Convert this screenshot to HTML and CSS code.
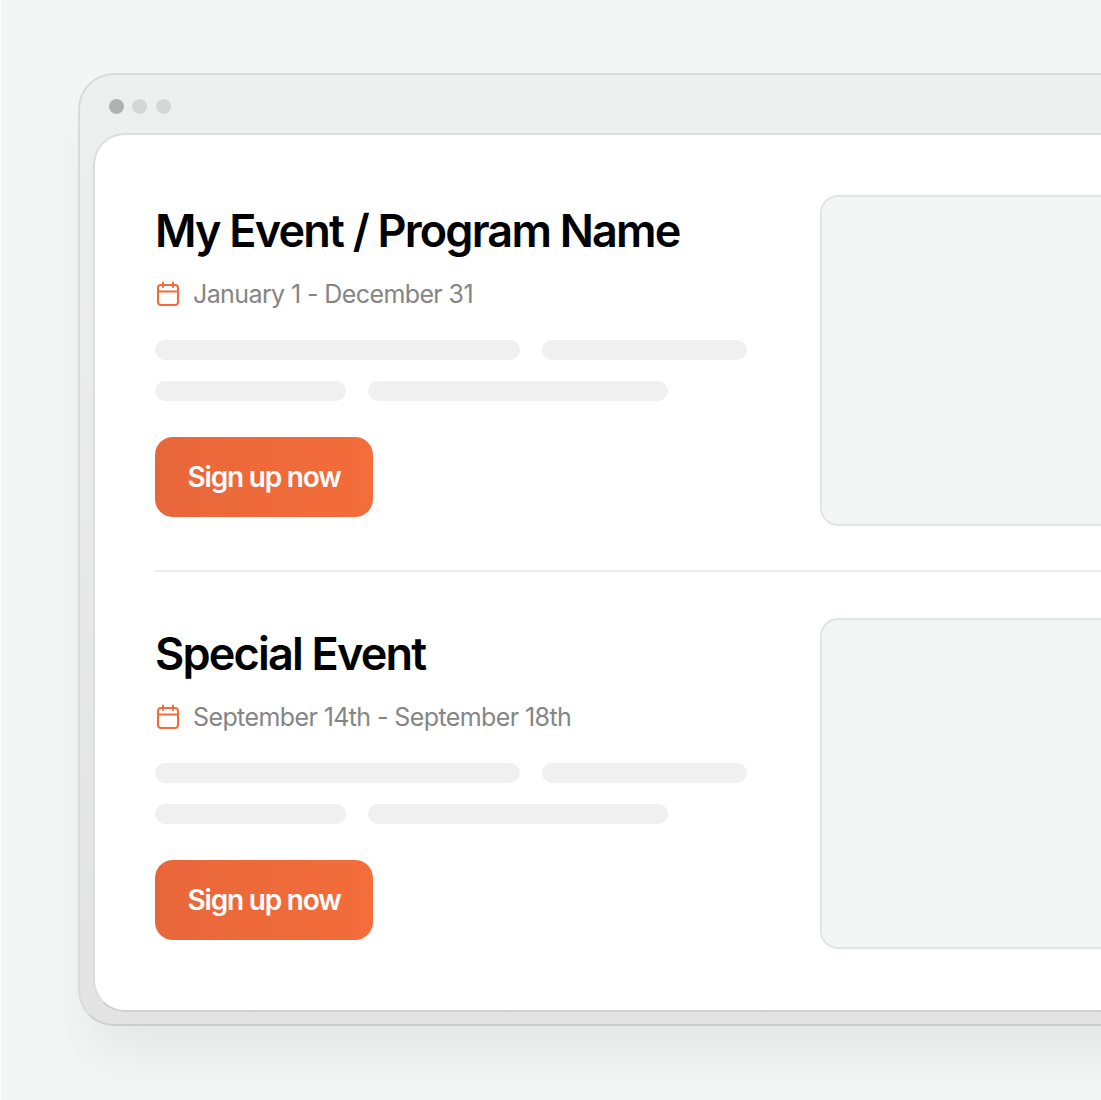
FILE: index.html
```html
<!DOCTYPE HTML>
<html>
<head>
  <title>Events</title>
  <meta name="viewport" content="width=device-width, initial-scale=1">
  <link rel="stylesheet" href="styles.css">
</head>
<body>

  <div class="window">
    <div class="toolbar">
      <span class="dot dark"></span>
      <span class="dot"></span>
      <span class="dot"></span>
    </div>

    <div class="content">
      <div class="event">
        <div class="event-info">
          <h2>My Event / Program Name</h2>
          <div class="event-date">
            <svg class="calendar" width="24" height="26" viewBox="0 0 24 26" fill="none" stroke="#f26c3b" stroke-width="2" stroke-linecap="round" stroke-linejoin="round">
              <rect x="2" y="4" width="20" height="20" rx="3"/>
              <path d="M2 10.5H22M7 1.5V6M17 1.5V6"/>
            </svg>
            <span>January 1 - December 31</span>
          </div>
          <div class="bar-row">
            <span class="bar w365"></span>
            <span class="bar w205"></span>
          </div>
          <div class="bar-row">
            <span class="bar w191"></span>
            <span class="bar w300"></span>
          </div>
          <a class="button">Sign up now</a>
        </div>
        <div class="event-image"></div>
      </div>

      <div class="event">
        <div class="event-info">
          <h2>Special Event</h2>
          <div class="event-date">
            <svg class="calendar" width="24" height="26" viewBox="0 0 24 26" fill="none" stroke="#f26c3b" stroke-width="2" stroke-linecap="round" stroke-linejoin="round">
              <rect x="2" y="4" width="20" height="20" rx="3"/>
              <path d="M2 10.5H22M7 1.5V6M17 1.5V6"/>
            </svg>
            <span>September 14th - September 18th</span>
          </div>
          <div class="bar-row">
            <span class="bar w365"></span>
            <span class="bar w205"></span>
          </div>
          <div class="bar-row">
            <span class="bar w191"></span>
            <span class="bar w300"></span>
          </div>
          <a class="button">Sign up now</a>
        </div>
        <div class="event-image"></div>
      </div>
    </div>
  </div>

</body>
</html>
```

FILE: styles.css
```css
html, body { height: 100%; }
body {
  margin: 0;
  padding: 73px 0 0 77px;
  box-sizing: border-box;
  height: 1100px;
  overflow: hidden;
  border-left: 1px solid #fff;
  background-color: #f4f6f5;
  font-family: Inter, "Liberation Sans", sans-serif;
}

.window {
  box-sizing: border-box;
  width: 1100px;
  height: 953px;
  padding: 0 0 13px 13px;
  border: 2px solid #d9dbda;
  border-bottom-color: #cdcecd;
  border-radius: 36px 0 0 36px;
  background: linear-gradient(180deg, #eef0ef 0%, #e2e3e2 100%);
  box-shadow: 0 36px 50px -8px rgba(0, 0, 0, 0.06);
}

.toolbar {
  box-sizing: border-box;
  display: flex;
  align-items: center;
  gap: 8.3px;
  height: 58px;
  padding: 4px 0 0 16px;
}
.dot {
  width: 15px;
  height: 15px;
  border-radius: 50%;
  background-color: #d5d7d6;
}
.dot.dark { background-color: #b0b1b0; }

.content {
  box-sizing: border-box;
  height: 879px;
  padding: 0 0 0 60px;
  border: 2px solid #dcdedd;
  border-bottom-color: #d0d1d0;
  border-right: none;
  border-radius: 32px 0 0 32px;
  background-color: #fff;
}

.event {
  display: flex;
  padding: 60px 0 44px;
  border-bottom: 2px solid #ececec;
}
.event + .event {
  padding-top: 46px;
  border-bottom: none;
}

.event-info { width: 665px; flex-shrink: 0; }
.event-info h2 {
  margin: 9px 0 0;
  font-size: 45px;
  line-height: 54px;
  font-weight: 600;
  letter-spacing: -1.8px;
  color: #000;
}

.event-date {
  display: flex;
  align-items: center;
  gap: 13px;
  margin-top: 18px;
  font-size: 25px;
  line-height: 36px;
  letter-spacing: -0.6px;
  color: #858585;
}
.calendar { margin-left: 1px; }

.bar-row {
  display: flex;
  gap: 22px;
  margin-top: 21px;
}
.event-date + .bar-row { margin-top: 28px; }
.bar {
  height: 20px;
  border-radius: 10px;
  background-color: #f0f0f0;
}
.w365 { width: 365px; }
.w205 { width: 205px; }
.w191 { width: 191px; }
.w300 { width: 300px; }

.button {
  display: flex;
  align-items: center;
  justify-content: center;
  width: 218px;
  height: 80px;
  margin-top: 36px;
  border-radius: 18px;
  background: linear-gradient(90deg, #e8673a 0%, #f46d3b 100%);
  color: #fff;
  font-size: 28px;
  font-weight: 600;
  letter-spacing: -1.2px;
}

.event-image {
  box-sizing: border-box;
  flex: 1;
  height: 331px;
  border: 2px solid #e3e5e4;
  border-right: none;
  border-radius: 18px 0 0 18px;
  background-color: #f4f6f5;
}
```
